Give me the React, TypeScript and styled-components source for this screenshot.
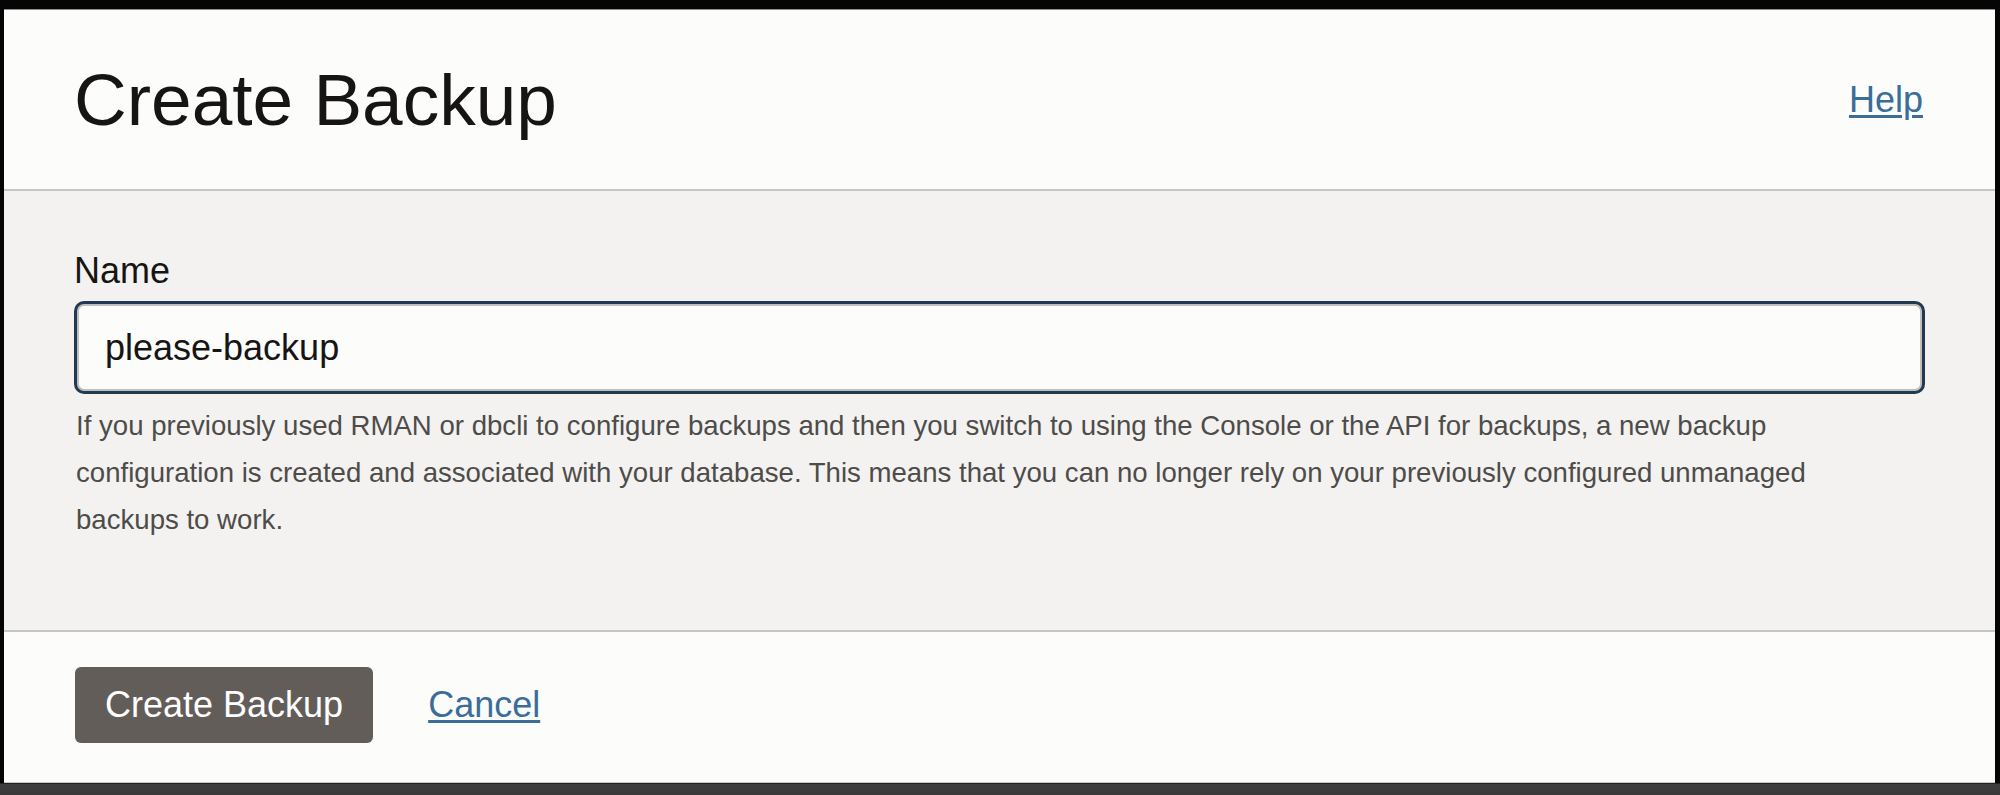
import styled, { createGlobalStyle } from 'styled-components';

const GlobalStyle = createGlobalStyle`
  html, body {
    margin: 0;
    padding: 0;
    background: #050505;
  }
  * {
    box-sizing: border-box;
  }
`;

const Backdrop = styled.div`
  width: 2000px;
  height: 795px;
  padding: 9px 5px 0 4px;
  background: linear-gradient(to bottom, #050505 0, #050505 783px, #3e3e3e 784px, #3a3a3a 100%);
  font-family: "Liberation Sans", Arial, sans-serif;
`;

const Dialog = styled.div`
  width: 1991px;
  height: 774px;
  display: flex;
  flex-direction: column;
  background: #fcfcfb;
  border-top: 1px solid #8e8e8c;
  border-bottom: 1px solid #c9c7c3;
`;

const Header = styled.header`
  height: 181px;
  padding: 0 72px 0 70px;
  display: flex;
  align-items: center;
  justify-content: space-between;
  border-bottom: 2px solid #c8c6c2;
`;

const Title = styled.h1`
  margin: 0;
  font-size: 73px;
  line-height: 1;
  font-weight: 400;
  color: #161513;
`;

const Link = styled.a`
  font-size: 36px;
  line-height: 1;
  color: #3a6e99;
  text-decoration: underline;
  text-underline-offset: 3px;
  cursor: pointer;
`;

const Body = styled.section`
  flex: 1;
  background: #f3f2f1;
  padding: 59px 70px 0 70px;
  border-bottom: 2px solid #c8c6c2;
`;

const Label = styled.label`
  display: block;
  font-size: 36px;
  color: #161513;
  margin-bottom: 9px;
`;

const Field = styled.div`
  height: 93px;
  padding: 3px;
  border-radius: 10px;
  background: #1f3a52;
`;

const Input = styled.input`
  width: 100%;
  height: 100%;
  border: 2px solid #c2bfbb;
  border-radius: 7px;
  background: #fcfcfb;
  padding: 0 0 0 26px;
  font-family: inherit;
  font-size: 36px;
  color: #161513;
  outline: none;
`;

const Hint = styled.p`
  max-width: 1790px;
  margin: 8px 0 0 2px;
  font-size: 27.6px;
  line-height: 47px;
  color: #4e4c49;
`;

const Footer = styled.footer`
  height: 150px;
  padding: 0 70px 4px 71px;
  display: flex;
  align-items: center;
  gap: 55px;
`;

const PrimaryButton = styled.button`
  height: 76px;
  padding: 0 30px;
  border: none;
  border-radius: 6px;
  background: #635d5a;
  color: #ffffff;
  font-family: inherit;
  font-size: 36px;
  cursor: pointer;
`;

export default function App() {
  return (
    <>
      <GlobalStyle />
      <Backdrop>
        <Dialog>
          <Header>
            <Title>Create Backup</Title>
            <Link>Help</Link>
          </Header>
          <Body>
            <Label htmlFor="backup-name">Name</Label>
            <Field>
              <Input id="backup-name" defaultValue="please-backup" />
            </Field>
            <Hint>
              If you previously used RMAN or dbcli to configure backups and then you switch to using the Console or the API for backups, a new backup configuration is created and associated with your database. This means that you can no longer rely on your previously configured unmanaged backups to work.
            </Hint>
          </Body>
          <Footer>
            <PrimaryButton>Create Backup</PrimaryButton>
            <Link>Cancel</Link>
          </Footer>
        </Dialog>
      </Backdrop>
    </>
  );
}
